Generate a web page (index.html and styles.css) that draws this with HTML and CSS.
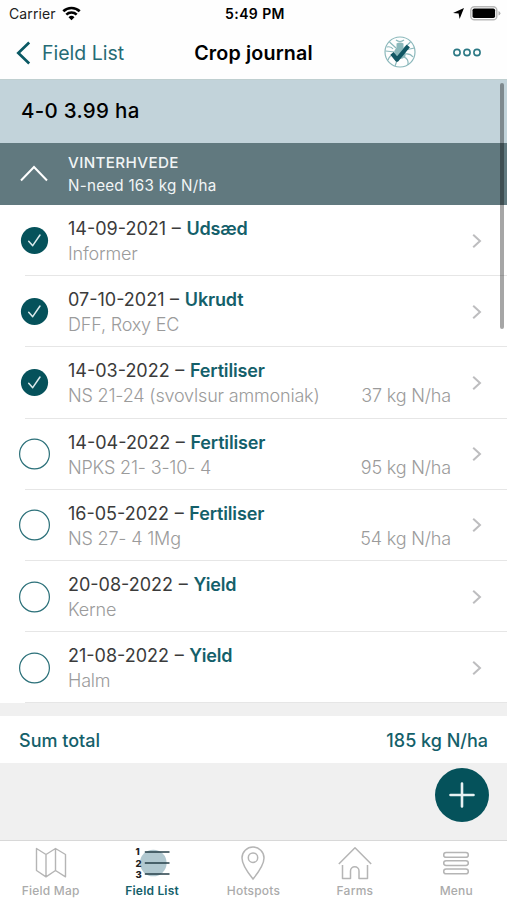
FILE: index.html
```
<!DOCTYPE html>
<html lang="en">
<head>
<meta charset="utf-8">
<title>Crop journal</title>
<link rel="stylesheet" href="styles.css">
</head>
<body>
<svg class="defs" aria-hidden="true">
  <symbol id="chevron" viewBox="0 0 10 16"><path d="M1.200 1.700 8 8l-6.800 6.300" fill="none" stroke="#bdbdbf" stroke-width="2"/></symbol>
  <symbol id="done" viewBox="0 0 32 32"><circle cx="16.500" cy="15.500" r="13.600" fill="#05525b"/><path d="M10.700 16.300l4 4.400 7.300-10.700" fill="none" stroke="#dcebed" stroke-width="1.500" stroke-linecap="round" stroke-linejoin="round"/></symbol>
  <symbol id="open" viewBox="0 0 32 32"><circle cx="16.500" cy="16" r="14.900" fill="#fff" stroke="#2b7079" stroke-width="1.200"/></symbol>
</svg>
<div class="app">
  <header class="top">
    <div class="status">
      <div class="carrier"><span>Carrier</span>
        <svg width="19" height="15" viewBox="0 0 19 15"><g fill="none" stroke="#000" stroke-width="2.600"><path d="M1.300 5.300a11.700 11.700 0 0 1 16.400 0"/><path d="M4.300 8.600a7.500 7.500 0 0 1 10.400 0"/></g><path d="M9.500 14.200 6.500 11.200a4.300 4.300 0 0 1 6 0z"/></svg>
      </div>
      <div class="clock">5:49 PM</div>
      <div class="power">
        <svg width="11" height="11" viewBox="0 0 11 11"><path d="M11 0 6.600 11 5.600 5.600.0 5z"/></svg>
        <svg width="31" height="15" viewBox="0 0 31 15"><rect x=".8" y=".8" width="26" height="13" rx="3.600" fill="#fff" stroke="#b8b8b8" stroke-width="1.500"/><rect x="2.500" y="2.500" width="22.600" height="9.600" rx="1.800"/><path d="M28.500 5v4.600q1.900-.7 1.900-2.300T28.500 5z" fill="#b0b0b0"/></svg>
      </div>
    </div>
    <nav class="nav">
      <a class="back"><svg width="15" height="24" viewBox="0 0 15 24"><path d="M13.200 1.500 2.300 12l10.900 10.500" fill="none" stroke="#0a5964" stroke-width="2.700"/></svg><span>Field List</span></a>
      <h1>Crop journal</h1>
      <div class="tools">
        <svg width="32" height="32" viewBox="0 0 32 32"><g fill="none" stroke="#8bb8bb" stroke-width="1.200"><circle cx="16" cy="16" r="15"/><path d="M12 12 5.500 6M20 12l6.500-6M11 16l-9.500-1M11 19q-5-1-7 5M14 22l-3 8M20 21q5 2 4 8M21 18q5-1 8 3M21 14l9.500-2M12 4q4 3 8 0M3 11q4-1 6 2"/></g><path d="M12.500 7.500q3.500-2 7 0v4l2 3v6q-5.500 5-11 0v-6l2-3z" fill="#8bb8bb"/><path d="M8 17.400l5 6.200L24.300 10" fill="none" stroke="#115663" stroke-width="4.200" stroke-linejoin="round"/></svg>
        <svg class="more" width="28" height="9" viewBox="0 0 28 9"><g fill="none" stroke="#2b7884" stroke-width="1.600"><circle cx="4" cy="4.500" r="3.100"/><circle cx="14" cy="4.500" r="3.100"/><circle cx="24" cy="4.500" r="3.100"/></g></svg>
      </div>
    </nav>
  </header>
  <main class="content">
    <div class="field">4-0 3.99 ha</div>
    <section class="crop">
      <svg width="28" height="17" viewBox="0 0 28 17"><path d="M1 15.500 14 2l13 13.500" fill="none" stroke="#fff" stroke-width="2"/></svg>
      <div class="croptext"><div class="cropname">VINTERHVEDE</div><div class="need">N-need 163 kg N/ha</div></div>
    </section>
    <ul class="rows">
      <li class="row"><svg class="mark"><use href="#done"/></svg><div class="info"><div class="head">14-09-2021 – <b>Udsæd</b></div><div class="sub"><span>Informer</span></div></div><svg class="chev"><use href="#chevron"/></svg></li>
      <li class="row"><svg class="mark"><use href="#done"/></svg><div class="info"><div class="head">07-10-2021 – <b>Ukrudt</b></div><div class="sub"><span>DFF, Roxy EC</span></div></div><svg class="chev"><use href="#chevron"/></svg></li>
      <li class="row"><svg class="mark"><use href="#done"/></svg><div class="info"><div class="head">14-03-2022 – <b>Fertiliser</b></div><div class="sub"><span>NS 21-24 (svovlsur ammoniak)</span><span>37 kg N/ha</span></div></div><svg class="chev"><use href="#chevron"/></svg></li>
      <li class="row"><svg class="mark"><use href="#open"/></svg><div class="info"><div class="head">14-04-2022 – <b>Fertiliser</b></div><div class="sub"><span>NPKS 21- 3-10- 4</span><span>95 kg N/ha</span></div></div><svg class="chev"><use href="#chevron"/></svg></li>
      <li class="row"><svg class="mark"><use href="#open"/></svg><div class="info"><div class="head">16-05-2022 – <b>Fertiliser</b></div><div class="sub"><span>NS 27- 4 1Mg</span><span>54 kg N/ha</span></div></div><svg class="chev"><use href="#chevron"/></svg></li>
      <li class="row"><svg class="mark"><use href="#open"/></svg><div class="info"><div class="head">20-08-2022 – <b>Yield</b></div><div class="sub"><span>Kerne</span></div></div><svg class="chev"><use href="#chevron"/></svg></li>
      <li class="row"><svg class="mark"><use href="#open"/></svg><div class="info"><div class="head">21-08-2022 – <b>Yield</b></div><div class="sub"><span>Halm</span></div></div><svg class="chev"><use href="#chevron"/></svg></li>
    </ul>
    <div class="total"><span>Sum total</span><span>185 kg N/ha</span></div>
    <div class="spacer"><button class="add" aria-label="Add"><svg width="26" height="26" viewBox="0 0 26 26"><path d="M13 1.500v23M1.500 13h23" stroke="#e8f2f3" stroke-width="2.600" stroke-linecap="round"/></svg></button></div>
    <div class="scrollbar"></div>
  </main>
  <footer class="tabs">
    <a class="tab"><svg width="36" height="36" viewBox="0 0 36 36"><path d="M3.500 3.500 13 9.500l9.500-6 10 6v22.300l-10-6.300-9.500 6.300-9.500-6.300zM13 9.500v22.300M22.500 3.500v22" fill="none" stroke="#b5b5b5" stroke-width="1.400" stroke-linejoin="round"/></svg><span>Field Map</span></a>
    <a class="tab active"><svg width="36" height="36" viewBox="0 0 36 36"><circle cx="19.300" cy="18" r="13.300" fill="#b1c8d0"/><path d="M10.800 7H35.500M10.800 18H35.500M10.800 29H35.500" stroke="#263f48" stroke-width="1.700"/><g class="nums"><text x="1.500" y="10.400">1</text><text x="1.500" y="21.700">2</text><text x="1.500" y="32.700">3</text></g></svg><span>Field List</span></a>
    <a class="tab"><svg width="36" height="36" viewBox="0 0 36 36"><path d="M18 34Q7 20.500 7 13a11 11 0 0 1 22 0Q29 20.500 18 34z" fill="none" stroke="#b5b5b5" stroke-width="1.500"/><circle cx="18" cy="12.700" r="4.700" fill="none" stroke="#b5b5b5" stroke-width="1.500"/></svg><span>Hotspots</span></a>
    <a class="tab"><svg width="36" height="36" viewBox="0 0 36 36"><path d="M1.800 19 18 2.800 34.200 19M5.500 20v13.500h8V26a4 4 0 0 1 8.500 0v7.500h8.500V20" fill="none" stroke="#b5b5b5" stroke-width="1.500" stroke-linejoin="round"/></svg><span>Farms</span></a>
    <a class="tab"><svg width="36" height="36" viewBox="0 0 36 36"><g fill="none" stroke="#b5b5b5" stroke-width="1.500"><rect x="5.700" y="7.500" width="24.600" height="4.800" rx="2.400"/><rect x="5.700" y="15.700" width="24.600" height="4.800" rx="2.400"/><rect x="5.700" y="24" width="24.600" height="4.800" rx="2.400"/></g></svg><span>Menu</span></a>
  </footer>
</div>
</body>
</html>
```
FILE: styles.css
```
* { box-sizing: border-box; }
body { margin: 0; background: #fff; font-family: Inter, "Liberation Sans", sans-serif; color: #000; }
svg { display: block; flex: none; }
.defs { width: 0; height: 0; position: absolute; }
.app { width: 507px; height: 900px; display: flex; flex-direction: column; overflow: hidden; }

.top { height: 80px; border-bottom: 1.500px solid #bfcfd0; background: #fefefe; }
.status { height: 27px; display: grid; grid-template-columns: 1fr auto 1fr; align-items: center; padding: 0 6px 0 9px; font-size: 14px; }
.carrier { display: flex; align-items: center; gap: 6px; color: #222; letter-spacing: .12px; }
.clock { font-weight: 600; font-size: 14px; letter-spacing: .4px; }
.power { display: flex; justify-content: flex-end; align-items: center; gap: 6px; }
.nav { height: 50px; display: grid; grid-template-columns: 1fr auto 1fr; align-items: center; padding: 0 16px; }
.back { display: flex; align-items: center; gap: 11px; font-size: 19.500px; color: #266b75; padding-top: 1px; }
.nav h1 { margin: 1px 0 0; font-size: 19.700px; font-weight: 600; letter-spacing: .15px; }
.tools { display: flex; justify-content: flex-end; align-items: center; gap: 37px; padding-right: 10px; }

.content { position: relative; height: 760px; background: #f0f0f0; }
.field { height: 62.500px; padding-left: 21px; background: #c2d3da; font-size: 20.500px; font-weight: 500; letter-spacing: .3px; line-height: 62px; }
.crop { height: 62.500px; display: flex; align-items: center; gap: 20px; padding-left: 20px; background: #61797f; color: #f1f5f6; }
.croptext { font-size: 15.200px; line-height: 23px; letter-spacing: .25px; }
.cropname { font-weight: 500; letter-spacing: .38px; }
.rows { list-style: none; margin: 0; padding: 0; background: #fff; }
.row { height: 71.200px; display: flex; align-items: center; padding: 0 25px 0 18px; background: linear-gradient(#e6e6e6, #e6e6e6) 25px 100% / 100% 1px no-repeat; }
.mark { width: 32px; height: 32px; margin-right: 18px; }
.info { flex: 1; line-height: 25px; margin-top: 1px; }
.head { font-size: 18px; color: #3b3b3b; word-spacing: .6px; }
.head b { font-weight: 600; color: #14606a; letter-spacing: -.15px; }
.sub { display: flex; justify-content: space-between; font-size: 18px; font-weight: 350; letter-spacing: -.18px; color: #9b9b9b; }
.chev { width: 10px; height: 16px; margin-left: 21px; }
.total { height: 47.500px; margin-top: 12.500px; padding: 1px 19px 0; display: flex; align-items: center; justify-content: space-between; background: #fff; color: #14606a; font-size: 18px; font-weight: 500; }
.spacer { display: flex; justify-content: flex-end; padding: 5px 18px 0; }
.add { width: 54px; height: 54px; border: 0; border-radius: 50%; padding: 0; display: grid; place-items: center; background: #05525b; }
.scrollbar { position: absolute; top: 3px; right: 3px; width: 4px; height: 246px; border-radius: 2px; background: rgba(0, 0, 0, .35); }

.tabs { height: 60px; display: grid; grid-template-columns: repeat(5, 1fr); background: #fff; border-top: 1px solid #d8d8d8; }
.tab { display: flex; flex-direction: column; align-items: center; padding-top: 4px; font-size: 12px; font-weight: 500; line-height: 20px; letter-spacing: .2px; color: #ababab; }
.tab.active { color: #14606a; font-weight: 600; }
.nums text { font-size: 9.500px; font-weight: 800; fill: #222; }
```
